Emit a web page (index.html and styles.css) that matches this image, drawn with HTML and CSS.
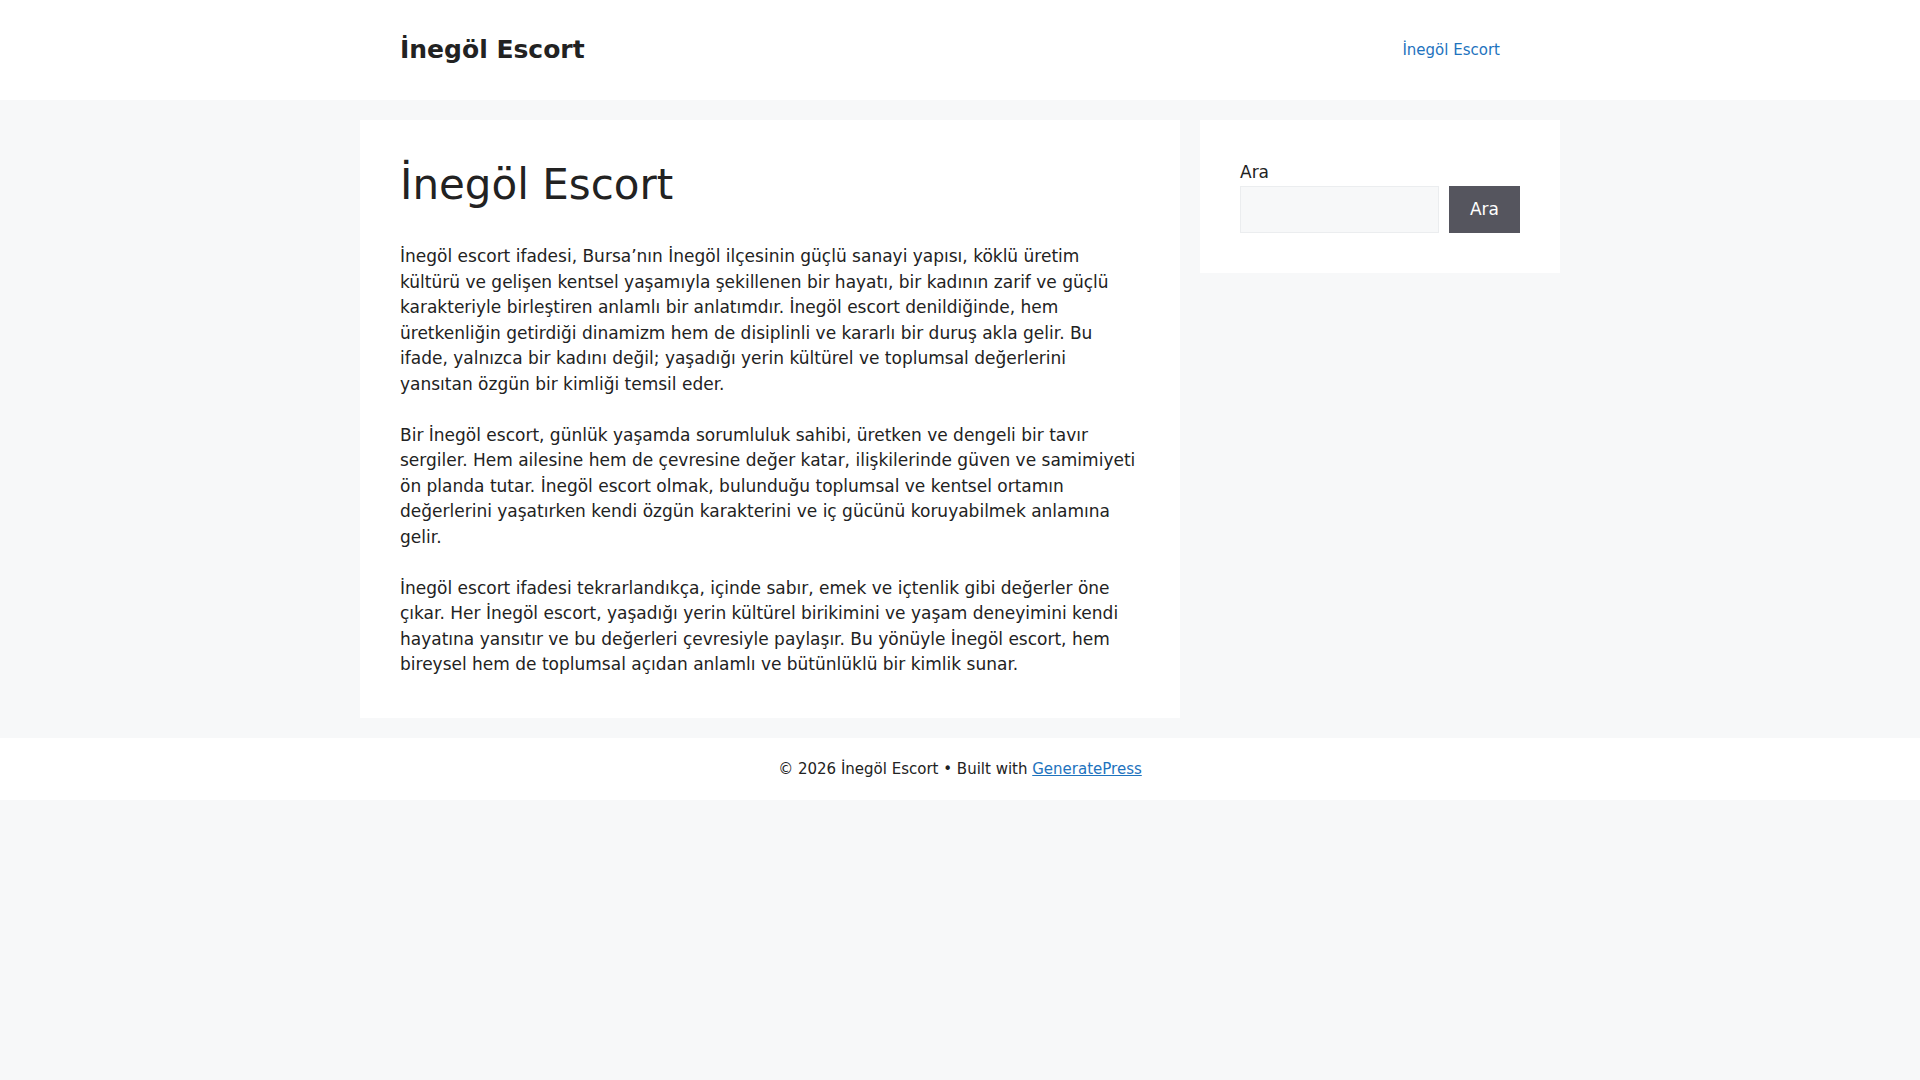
FILE: index.html
```html
<!DOCTYPE html>
<html lang="tr">
<head>
<meta charset="utf-8">
<title>İnegöl Escort</title>
<link rel="stylesheet" href="styles.css">
</head>
<body>
<header class="site-header">
  <div class="inside-header">
    <p class="site-title">İnegöl Escort</p>
    <nav class="main-nav">
      <a class="nav-link" href="#">İnegöl Escort</a>
    </nav>
  </div>
</header>
<div class="site-content">
  <main class="content-area">
    <article class="inside-article">
      <h1 class="entry-title">İnegöl Escort</h1>
      <div class="entry-content">
        <p>İnegöl escort ifadesi, Bursa’nın İnegöl ilçesinin güçlü sanayi yapısı, köklü üretim kültürü ve gelişen kentsel yaşamıyla şekillenen bir hayatı, bir kadının zarif ve güçlü karakteriyle birleştiren anlamlı bir anlatımdır. İnegöl escort denildiğinde, hem üretkenliğin getirdiği dinamizm hem de disiplinli ve kararlı bir duruş akla gelir. Bu ifade, yalnızca bir kadını değil; yaşadığı yerin kültürel ve toplumsal değerlerini yansıtan özgün bir kimliği temsil eder.</p>
        <p>Bir İnegöl escort, günlük yaşamda sorumluluk sahibi, üretken ve dengeli bir tavır sergiler. Hem ailesine hem de çevresine değer katar, ilişkilerinde güven ve samimiyeti ön planda tutar. İnegöl escort olmak, bulunduğu toplumsal ve kentsel ortamın değerlerini yaşatırken kendi özgün karakterini ve iç gücünü koruyabilmek anlamına gelir.</p>
        <p>İnegöl escort ifadesi tekrarlandıkça, içinde sabır, emek ve içtenlik gibi değerler öne çıkar. Her İnegöl escort, yaşadığı yerin kültürel birikimini ve yaşam deneyimini kendi hayatına yansıtır ve bu değerleri çevresiyle paylaşır. Bu yönüyle İnegöl escort, hem bireysel hem de toplumsal açıdan anlamlı ve bütünlüklü bir kimlik sunar.</p>
      </div>
    </article>
  </main>
  <aside class="sidebar">
    <div class="widget">
      <form class="search-form">
        <label class="search-label" for="s">Ara</label>
        <div class="search-row">
          <input class="search-input" id="s" type="search">
          <button class="search-button" type="button">Ara</button>
        </div>
      </form>
    </div>
  </aside>
</div>
<footer class="site-footer">
  <div class="site-info">© 2026 İnegöl Escort • Built with <a href="#" class="footer-link">GeneratePress</a></div>
</footer>
</body>
</html>
```

FILE: styles.css
```css
* { box-sizing: border-box; }
html, body { margin: 0; padding: 0; }
body {
  background: #f7f8f9;
  color: #222222;
  font-family: "DejaVu Sans", sans-serif;
  font-size: 17px;
  line-height: 1.5;
}
.site-header { background: #ffffff; }
.inside-header {
  max-width: 1200px;
  margin: 0 auto;
  padding: 20px 40px;
  display: flex;
  justify-content: space-between;
  align-items: center;
}
.site-title {
  margin: 0;
  font-size: 25px;
  font-weight: bold;
  line-height: 1.5;
  color: #222222;
}
.main-nav { display: flex; }
.nav-link {
  display: block;
  padding: 0 20px;
  line-height: 60px;
  font-size: 15px;
  color: #1e73be;
  text-decoration: none;
}
.site-content {
  max-width: 1200px;
  margin: 0 auto;
  display: flex;
  align-items: flex-start;
}
.content-area {
  width: 70%;
  padding-right: 20px;
  margin: 20px 0;
}
.inside-article {
  background: #ffffff;
  padding: 40px;
}
.entry-title {
  margin: 0;
  font-size: 42px;
  font-weight: normal;
  line-height: 1.2;
}
.entry-content { margin-top: 2em; }
.entry-content p { margin: 0 0 1.5em; }
.entry-content p:last-child { margin-bottom: 0; }
.sidebar {
  width: 30%;
  margin-top: 20px;
}
.widget {
  background: #ffffff;
  padding: 40px;
  margin-bottom: 20px;
}
.search-form { margin: 0; }
.search-label { display: block; }
.search-row { display: flex; gap: 10px; }
.search-input {
  flex: 1;
  min-width: 0;
  background: #f7f8f9;
  border: 1px solid #ebedef;
  padding: 10px 15px;
  font-family: inherit;
  font-size: 17px;
  line-height: 1.5;
  color: #222;
  border-radius: 0;
}
.search-button {
  background: #55555e;
  color: #ffffff;
  border: 1px solid transparent;
  padding: 10px 20px;
  font-family: inherit;
  font-size: 17px;
  line-height: 1.5;
  border-radius: 0;
}
.site-footer { background: #ffffff; }
.site-info {
  padding: 20px 40px;
  text-align: center;
  font-size: 15px;
  line-height: 1.5;
}
.footer-link { color: #1e73be; }
```
